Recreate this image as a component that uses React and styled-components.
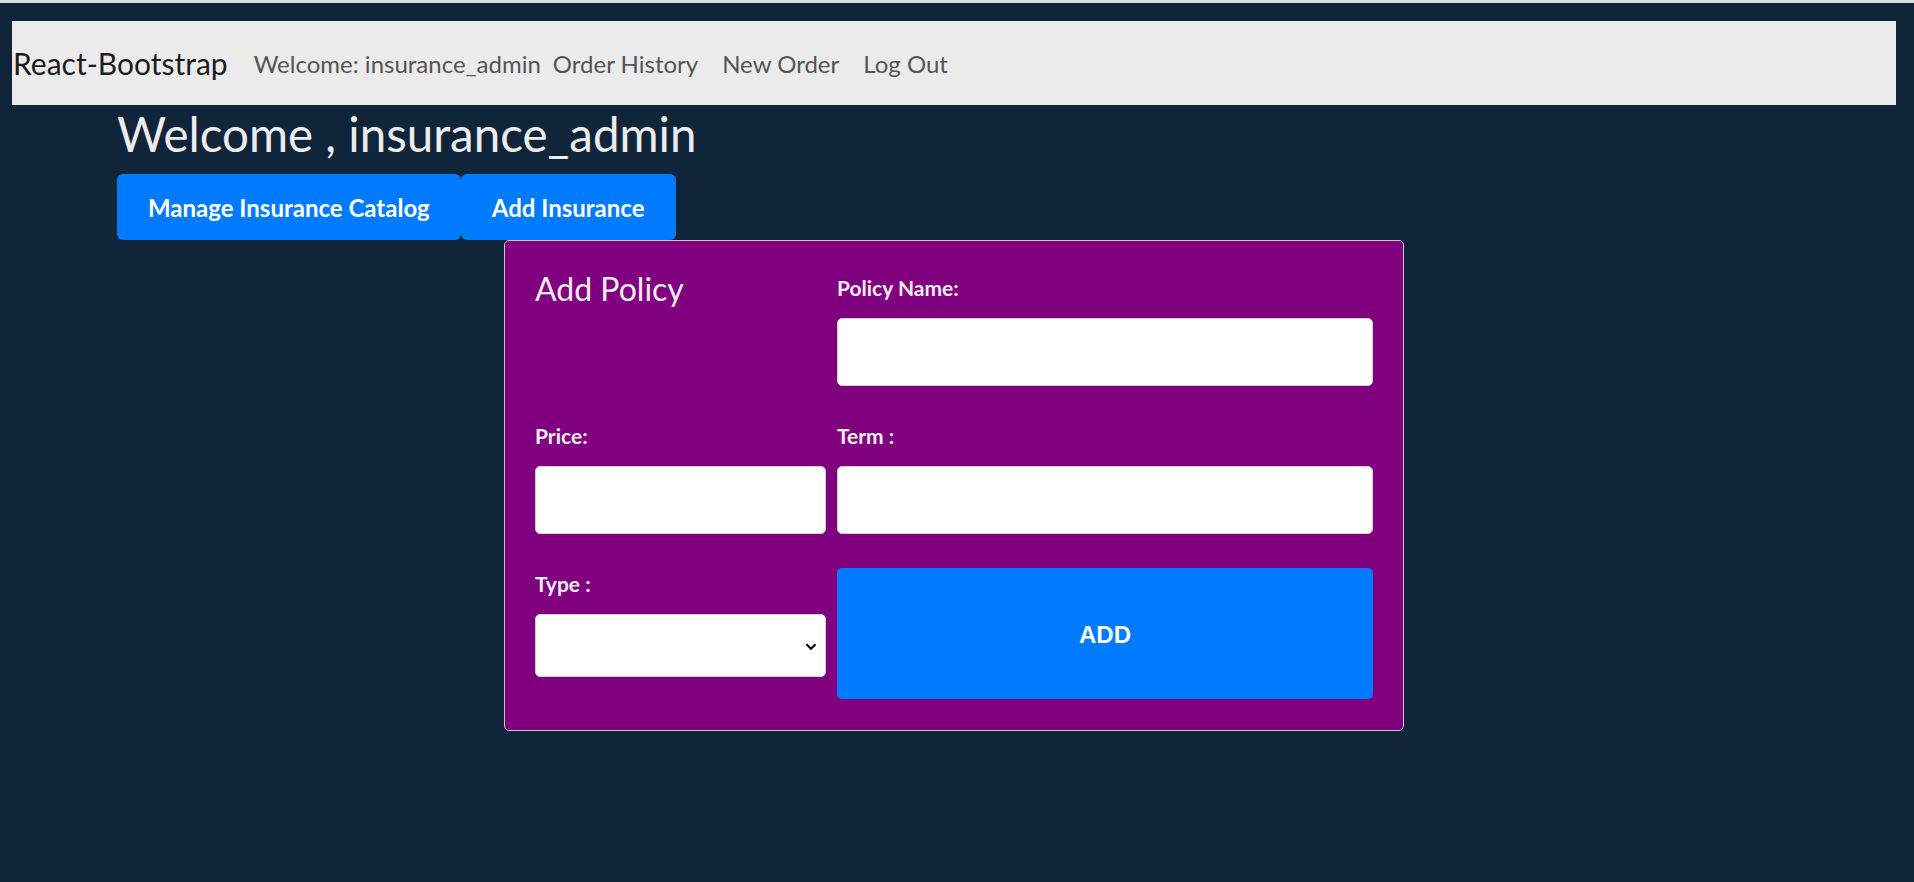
import React from "react";
import styled, { createGlobalStyle } from "styled-components";

const GlobalStyle = createGlobalStyle`
  html, body {
    margin: 0;
    padding: 0;
  }
  body {
    background: #10243a;
    border-top: 3px solid #dcdcdc;
    font-family: Lato, "Open Sans", sans-serif;
    min-height: 100vh;
    box-sizing: border-box;
  }
  * {
    box-sizing: border-box;
  }
`;

const Page = styled.div`
  padding-top: 18px;
  margin: 0 18px 0 12px;
`;

const Navbar = styled.nav`
  display: flex;
  align-items: center;
  height: 84px;
  background: #ebebeb;
  padding-left: 1px;
`;

const Brand = styled.a`
  font-size: 30px;
  color: rgba(0, 0, 0, 0.9);
  margin-right: 26px;
  text-decoration: none;
`;

const NavText = styled.span`
  font-size: 24px;
  color: #555;
`;

const NavLink = styled.a`
  font-size: 24px;
  color: #555;
  padding: 0 12px;
  text-decoration: none;
  cursor: pointer;
`;

const Main = styled.main`
  padding-left: 105px;
`;

const Title = styled.h1`
  margin: 0;
  font-size: 47.5px;
  font-weight: 400;
  line-height: 1.2;
  color: #ececec;
`;

const Toolbar = styled.div`
  display: flex;
  margin-top: 12px;
`;

const Button = styled.button`
  height: 66px;
  padding: 0 31px;
  border: none;
  border-radius: 6px;
  background: #007bff;
  color: #fff;
  font-family: Lato, sans-serif;
  font-weight: 700;
  font-size: 24px;
  cursor: pointer;
`;

const Card = styled.form`
  width: 900px;
  margin: 0 auto;
  background: #800080;
  border: 1px solid #c8c8c8;
  border-radius: 5px;
  padding: 31px 30px;
  display: grid;
  grid-template-columns: 291px 536px;
  column-gap: 11px;
  row-gap: 34px;
  align-items: start;
`;

const CardTitle = styled.h3`
  margin: 0;
  font-size: 32px;
  font-weight: 400;
  line-height: 1.05;
  color: #eee;
`;

const Field = styled.div`
  display: flex;
  flex-direction: column;
`;

const Label = styled.label`
  font-size: 21px;
  font-weight: 700;
  line-height: 24px;
  color: #eee;
  margin: 4px 0 18px;
`;

const Input = styled.input`
  height: 68px;
  width: 100%;
  background: #fff;
  border: 1px solid #cfcfcf;
  border-radius: 5px;
  font-family: Lato, sans-serif;
  font-size: 20px;
  padding: 0 12px;
`;

const SelectWrap = styled.div`
  position: relative;
  height: 63px;
`;

const Select = styled.select`
  appearance: none;
  height: 100%;
  width: 100%;
  background: #fff;
  border: 1px solid #cfcfcf;
  border-radius: 5px;
  font-family: Lato, sans-serif;
  font-size: 20px;
  padding: 0 36px 0 12px;
  color: #000;
`;

const Chevron = styled.svg`
  position: absolute;
  right: 9px;
  top: 50%;
  transform: translateY(-40%);
  pointer-events: none;
`;

const AddButton = styled.button`
  height: 131px;
  width: 100%;
  border: none;
  border-radius: 5px;
  background: #007bff;
  color: #fff;
  font-family: "Liberation Sans", Arial, sans-serif;
  font-weight: 700;
  font-size: 24px;
  padding-top: 3px;
  cursor: pointer;
`;

export default function App() {
  return (
    <>
      <GlobalStyle />
      <Page>
        <Navbar>
          <Brand>React-Bootstrap</Brand>
          <NavText>Welcome: insurance_admin</NavText>
          <NavLink>Order History</NavLink>
          <NavLink>New Order</NavLink>
          <NavLink>Log Out</NavLink>
        </Navbar>
        <Main>
          <Title>Welcome , insurance_admin</Title>
          <Toolbar>
            <Button type="button">Manage Insurance Catalog</Button>
            <Button type="button">Add Insurance</Button>
          </Toolbar>
        </Main>
        <Card onSubmit={(e) => e.preventDefault()}>
          <CardTitle>Add Policy</CardTitle>
          <Field>
            <Label>Policy Name:</Label>
            <Input type="text" />
          </Field>
          <Field>
            <Label>Price:</Label>
            <Input type="text" />
          </Field>
          <Field>
            <Label>Term :</Label>
            <Input type="text" />
          </Field>
          <Field>
            <Label>Type :</Label>
            <SelectWrap>
              <Select defaultValue="">
                <option value=""></option>
                <option value="health">Health</option>
                <option value="life">Life</option>
                <option value="auto">Auto</option>
              </Select>
              <Chevron width="12" height="8" viewBox="0 0 12 8">
                <path d="M1.5 1.5 L6 6 L10.5 1.5" fill="none" stroke="#000" strokeWidth="2" />
              </Chevron>
            </SelectWrap>
          </Field>
          <AddButton type="submit">ADD</AddButton>
        </Card>
      </Page>
    </>
  );
}
